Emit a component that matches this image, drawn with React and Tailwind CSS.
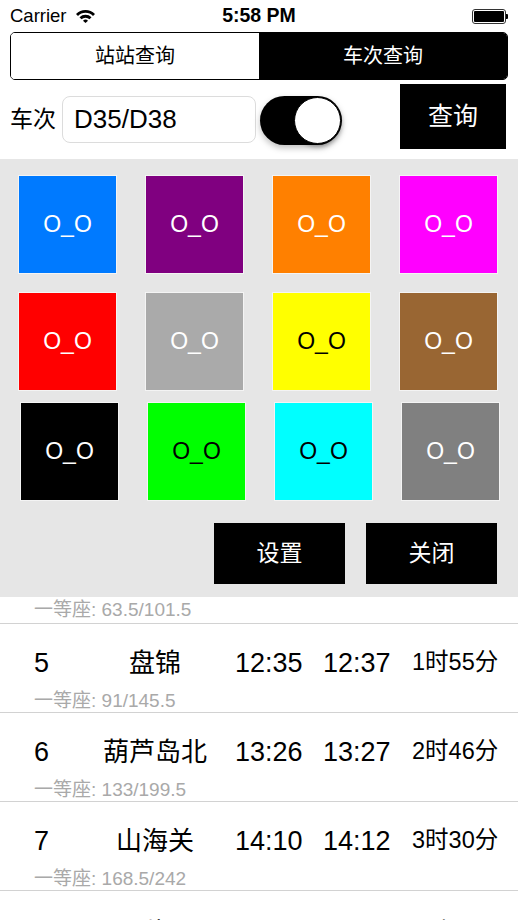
import React from "react";

const FONT = { fontFamily: '"Liberation Sans", "Noto Sans CJK SC", sans-serif' };

const tiles1 = [
  ["bg-[#007aff]", "text-white"],
  ["bg-[#800080]", "text-white"],
  ["bg-[#ff8000]", "text-white"],
  ["bg-[#ff00ff]", "text-white"],
];
const tiles2 = [
  ["bg-[#ff0000]", "text-white"],
  ["bg-[#aaaaaa]", "text-white"],
  ["bg-[#ffff00]", "text-black"],
  ["bg-[#996633]", "text-white"],
];
const tiles3 = [
  ["bg-[#000000]", "text-white"],
  ["bg-[#00ff00]", "text-black"],
  ["bg-[#00ffff]", "text-black"],
  ["bg-[#808080]", "text-white"],
];

function Tile({ c }) {
  return (
    <div
      className={`w-[97px] h-[97px] ${c[0]} ${c[1]} flex items-center justify-center text-[23px] outline outline-1 outline-[#f4f4f4]`}
    >
      O_O
    </div>
  );
}

const rows = [
  ["5", "盘锦", "12:35", "12:37", "1时55分", "91/145.5"],
  ["6", "葫芦岛北", "13:26", "13:27", "2时46分", "133/199.5"],
  ["7", "山海关", "14:10", "14:12", "3时30分", "168.5/242"],
  ["8", "北戴河", "14:35", "14:37", "3时55分", "180/270"],
];

function Row({ r, last }) {
  return (
    <div className="h-[89px] border-b border-[#d2d2d2] shrink-0">
      <div className={`${last ? "h-[84px]" : "h-[78px]"} flex items-center pl-[34px] text-black`}>
        <div className="w-[66px] text-[27px]">{r[0]}</div>
        <div className="w-[110px] text-center text-[26px] whitespace-nowrap">{r[1]}</div>
        <div className="ml-[25px] w-[88px] text-[27px]">{r[2]}</div>
        <div className="w-[89px] text-[27px]">{r[3]}</div>
        <div className="text-[23.5px] whitespace-nowrap">{r[4]}</div>
      </div>
      <div className="-mt-[14px] pl-[34px] text-[19px] text-[#a9a9a9] leading-[26px]">
        一等座: {r[5]}
      </div>
    </div>
  );
}

export default function App() {
  return (
    <div className="w-[518px] h-[920px] overflow-hidden bg-white flex flex-col" style={FONT}>
      {/* status bar */}
      <div className="h-[32px] shrink-0 flex items-center px-[10px] relative">
        <span className="text-[18.5px] text-black">Carrier</span>
        <svg className="ml-[8px]" width="21" height="14" viewBox="0 0 21 14">
          <path d="M1 5 A13.5 13.5 0 0 1 20 5 L18 7 A10.5 10.5 0 0 0 3 7 Z" fill="#000" />
          <path d="M4.5 8.3 A8.5 8.5 0 0 1 16.5 8.3 L14.5 10.3 A5.7 5.7 0 0 0 6.5 10.3 Z" fill="#000" />
          <path d="M8 11.7 A3.6 3.6 0 0 1 13 11.7 L10.5 14 Z" fill="#000" />
        </svg>
        <span className="absolute left-0 right-0 text-center text-[19.5px] font-bold text-black pointer-events-none">
          5:58 PM
        </span>
        <div className="ml-auto flex items-center">
          <div className="w-[34px] h-[15px] rounded-[3px] border border-[#333] p-[1px]">
            <div className="w-full h-full bg-black rounded-[1px]" />
          </div>
          <div className="w-[2px] h-[5px] bg-black rounded-r-[1px]" />
        </div>
      </div>

      {/* segmented control */}
      <div className="mx-[10px] h-[48px] shrink-0 border border-black rounded-[5px] flex overflow-hidden text-[20px]">
        <div className="flex-1 flex items-center justify-center bg-white text-black">站站查询</div>
        <div className="flex-1 flex items-center justify-center bg-black text-white">车次查询</div>
      </div>

      {/* query row */}
      <div className="h-[79px] shrink-0 flex items-start pl-[10px]">
        <div className="mt-[16px] h-[47px] flex items-center text-[23px] text-black">车次</div>
        <div className="mt-[16px] ml-[6px] w-[194px] h-[47px] border border-[#dcdcdc] rounded-[8px] flex items-center pl-[11px] text-[26px] text-black">
          D35/D38
        </div>
        <div className="mt-[16px] ml-[4px] w-[82px] h-[49px] rounded-full bg-black relative shadow-[0_3px_6px_rgba(0,0,0,0.25)]">
          <div className="absolute right-[1px] top-[1px] w-[47px] h-[47px] rounded-full bg-white border border-black shadow-[0_3px_4px_rgba(0,0,0,0.3)]" />
        </div>
        <div className="mt-[4px] ml-[58px] w-[106px] h-[65px] bg-black text-white flex items-center justify-center text-[25px]">
          查询
        </div>
      </div>

      {/* color panel */}
      <div className="h-[438px] shrink-0 bg-[#e6e6e6] flex flex-col">
        <div className="mt-[17px] flex gap-[30px] pl-[19px]">
          {tiles1.map((c, i) => <Tile key={i} c={c} />)}
        </div>
        <div className="mt-[20px] flex gap-[30px] pl-[19px]">
          {tiles2.map((c, i) => <Tile key={i} c={c} />)}
        </div>
        <div className="mt-[13px] flex gap-[30px] pl-[21px]">
          {tiles3.map((c, i) => <Tile key={i} c={c} />)}
        </div>
        <div className="mt-[23px] flex justify-end gap-[21px] pr-[21px]">
          <div className="w-[131px] h-[61px] bg-black text-white flex items-center justify-center text-[23px]">设置</div>
          <div className="w-[131px] h-[61px] bg-black text-white flex items-center justify-center text-[23px]">关闭</div>
        </div>
      </div>

      {/* list */}
      <div className="h-[27px] shrink-0 border-b border-[#d2d2d2] pl-[34px] flex items-center text-[19px] text-[#a9a9a9]">
        一等座: 63.5/101.5
      </div>
      {rows.map((r, i) => <Row key={i} r={r} last={i === rows.length - 1} />)}
    </div>
  );
}
